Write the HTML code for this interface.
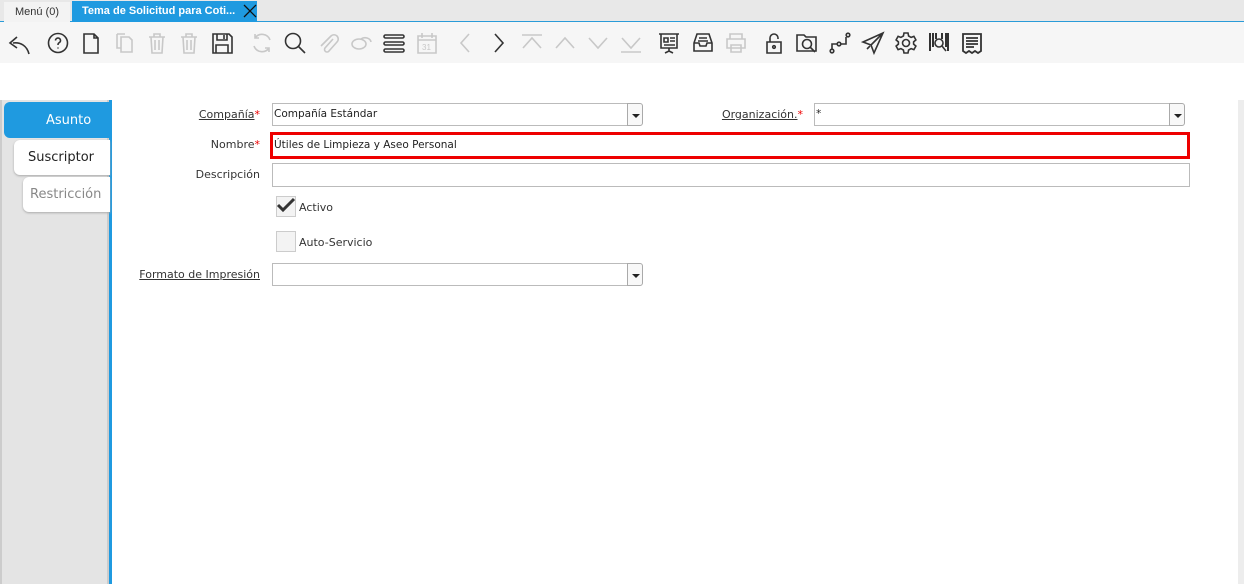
<!DOCTYPE html>
<html><head><meta charset="utf-8"><style>
*{box-sizing:border-box;margin:0;padding:0}
body{width:1244px;height:584px;overflow:hidden;background:#fff;font-family:"Liberation Sans","DejaVu Sans",sans-serif;font-size:12px;color:#222;position:relative}
.a{position:absolute}
.tabbar{left:0;top:0;width:1244px;height:22px;background:#e8e8e8;border-bottom:1px solid #2a9bd8}
.tb{left:0;top:22px;width:1244px;height:41px;background:#f6f6f6}
.lbl{font-family:"DejaVu Sans",sans-serif;font-size:11px;color:#333;text-align:right}
.req{color:#e00}
.inp{border:1px solid #bbb;background:#fff;font-family:"DejaVu Sans",sans-serif;font-size:10.5px;padding-left:1px;line-height:21px}
.dd{border:1px solid #aaa;border-radius:0 3px 3px 0;background:#f8f8f8;width:16px;height:23px}
.dd:after{content:"";position:absolute;left:4px;top:10px;border-left:4px solid transparent;border-right:4px solid transparent;border-top:4px solid #222}
.cb{width:20px;height:21px;border:1px solid #ccc;background:#f3f3f3}
svg{position:absolute;top:31px;width:24px;height:24px;fill:none;stroke-width:1.6}
.on{stroke:#333}.off{stroke:#c8c8c8}
</style></head><body>
<div class="a tabbar"></div>
<div class="a" style="left:4px;top:2px;width:66px;height:20px;background:#f3f3f3;font-size:11px;color:#333;line-height:20px;text-align:center">Menú (0)</div>
<div class="a" style="left:72px;top:1px;width:185px;height:21px;background:#1f9ae0;color:#fff;font-size:11px;font-weight:bold;line-height:21px;padding-left:10px;white-space:nowrap">Tema de Solicitud para Coti...</div>
<svg style="left:242px;top:3px;width:16px;height:16px" viewBox="0 0 16 16"><path d="M2 2L14 14M14 2L2 14" stroke="#111" stroke-width="1.3"/></svg>
<div class="a tb"></div>
<svg class="on" style="left:7px" viewBox="0 0 24 24"><path d="M22 23C20 15 14 11 6 12M10 6L3 12L10 17"/></svg>
<svg class="on" style="left:46px" viewBox="0 0 24 24"><circle cx="12" cy="12" r="9.5"/><path d="M9.5 9.5a2.5 2.5 0 1 1 3.5 2.3c-1 .5-1 1-1 2.2M12 16.5v1"/></svg>
<svg class="on" style="left:79px" viewBox="0 0 24 24"><path d="M5 3h10l4 4v15H5z M15 3v4h4"/></svg>
<svg class="off" style="left:112px" viewBox="0 0 24 24"><path d="M9 6h8l3 3v12H9zM5 3h8M5 3v14h4"/></svg>
<svg class="off" style="left:145px" viewBox="0 0 24 24"><path d="M4 6h16M9 6V3h6v3M6 6l1 16h10l1-16M10 9v10M14 9v10"/></svg>
<svg class="off" style="left:177px" viewBox="0 0 24 24"><path d="M4 6h16M9 6V3h6v3M6 6l1 16h10l1-16M10 9v10M14 9v10"/></svg>
<svg class="on" style="left:210px" viewBox="0 0 24 24"><path d="M3 3h16l3 3v16H3zM7 3v6h10V3M14 4v4M6 14h12v8H6z"/></svg>
<svg class="off" style="left:250px" viewBox="0 0 24 24"><path d="M20 9A8.5 8.5 0 0 0 5 7M4 15a8.5 8.5 0 0 0 15 2M5 3v4h4M19 21v-4h-4"/></svg>
<svg class="on" style="left:283px" viewBox="0 0 24 24"><circle cx="10" cy="10" r="7.5"/><path d="M15.5 15.5L22 22"/></svg>
<svg class="off" style="left:316px" viewBox="0 0 24 24"><path d="M17 8l-8 9a2.5 2.5 0 0 0 4 3l8-9a4 4 0 0 0-6-6L5 15"/></svg>
<svg class="off" style="left:349px" viewBox="0 0 24 24"><ellipse cx="10" cy="13" rx="7" ry="5"/><path d="M12 8a6 5 0 0 1 10 3"/></svg>
<svg class="on" style="left:382px" viewBox="0 0 24 24" stroke-width="2.2"><rect x="2" y="4" width="20" height="3" rx="1.5"/><rect x="2" y="11" width="20" height="3" rx="1.5"/><rect x="2" y="18" width="20" height="3" rx="1.5"/></svg>
<svg class="off" style="left:415px" viewBox="0 0 24 24"><path d="M3 5h18v17H3zM3 9h18M7 2v5M17 2v5"/><text x="7" y="19" font-size="8" fill="#c8c8c8" stroke="none">31</text></svg>
<svg class="off" style="left:454px" viewBox="0 0 24 24"><path d="M15 3L7 12l8 9"/></svg>
<svg class="on" style="left:486px" viewBox="0 0 24 24"><path d="M9 3l8 9-8 9"/></svg>
<svg class="off" style="left:520px" viewBox="0 0 24 24"><path d="M2 4h20M3 17l9-10 9 10"/></svg>
<svg class="off" style="left:553px" viewBox="0 0 24 24"><path d="M3 17l9-10 9 10"/></svg>
<svg class="off" style="left:586px" viewBox="0 0 24 24"><path d="M3 7l9 10 9-10"/></svg>
<svg class="off" style="left:619px" viewBox="0 0 24 24"><path d="M3 7l9 10 9-10M2 21h20"/></svg>
<svg class="on" style="left:657px" viewBox="0 0 24 24"><path d="M2 3h20M4 3v14h16V3M7 7h4v4H7zM13 7h5M13 10h5M7 14h11M12 17v3M8 22l4-2 4 2"/></svg>
<svg class="on" style="left:691px" viewBox="0 0 24 24"><path d="M6 3h12l3 9v8H3v-8zM3 12h5l1 3h6l1-3h5M8 7h8M7 10h10"/></svg>
<svg class="off" style="left:724px" viewBox="0 0 24 24"><path d="M6 8V3h12v5M3 8h18v9H3zM7 14h10v7H7z"/></svg>
<svg class="on" style="left:762px" viewBox="0 0 24 24"><path d="M5 11h14v11H5zM8 11V7a4 4 0 0 1 8 0v1"/><circle cx="12" cy="16" r="1.3"/></svg>
<svg class="on" style="left:795px" viewBox="0 0 24 24"><path d="M2 4h7l2 2h10v14H2z"/><circle cx="12" cy="13" r="4.5"/><path d="M15 16l5 5"/></svg>
<svg class="on" style="left:828px" viewBox="0 0 24 24"><circle cx="4" cy="20" r="1.8"/><circle cx="11" cy="13" r="1.8"/><circle cx="20" cy="4" r="1.8"/><path d="M4 18v-5h5M13 13h5V6"/></svg>
<svg class="on" style="left:861px" viewBox="0 0 24 24"><path d="M22 2L2 11l8 3 3 8zM22 2L10 14M6 18l3-3"/></svg>
<svg class="on" style="left:894px" viewBox="0 0 24 24"><circle cx="12" cy="12" r="3.5"/><path d="M10 2h4l.6 3 2.5 1.4 2.8-1 2 3.5-2.3 2v2.2l2.3 2-2 3.5-2.8-1-2.5 1.4L14 22h-4l-.6-3-2.5-1.4-2.8 1-2-3.5 2.3-2v-2.2l-2.3-2 2-3.5 2.8 1L9.4 5z"/></svg>
<svg class="on" style="left:927px" viewBox="0 0 24 24"><path d="M3 2v18M6 2v14M9 2v6M15 2v6M19 2v14M21 2v18" stroke-width="2"/><circle cx="12" cy="12" r="4"/><path d="M15 15l4 5"/></svg>
<svg class="on" style="left:960px" viewBox="0 0 24 24"><path d="M3 3h18v17l-3 2-3-2-3 2-3-2-3 2-3-2zM6 7h12M6 10h12M6 13h12M6 16h8" stroke-width="1.8"/></svg>

<div class="a" style="left:0;top:100px;width:109px;height:484px;background:#e4e4e4;border-left:2px solid #ccc;border-right:2px solid #ccc"></div>
<div class="a" style="left:109px;top:100px;width:3px;height:484px;background:#1f9ae0"></div>
<div class="a" style="left:1238px;top:100px;width:6px;height:484px;background:#ededed"></div>
<div class="a" style="left:4px;top:102px;width:106px;height:36px;background:#1f9ae0;border-radius:6px 0 0 6px;color:#fff;font-family:'DejaVu Sans',sans-serif;font-size:13px;line-height:37px;padding-left:42px">Asunto</div>
<div class="a" style="left:14px;top:140px;width:96px;height:35px;background:#fff;border-radius:6px 0 0 6px;box-shadow:0 1px 2px #aaa;font-family:'DejaVu Sans',sans-serif;font-size:13px;line-height:36px;padding-left:14px;color:#222">Suscriptor</div>
<div class="a" style="left:23px;top:177px;width:87px;height:35px;background:#fff;border-radius:6px 0 0 6px;box-shadow:0 1px 2px #aaa;font-family:'DejaVu Sans',sans-serif;font-size:13px;line-height:36px;padding-left:7px;color:#888">Restricción</div>

<div class="a lbl" style="left:150px;top:108px;width:110px"><u>Compañía</u><span class="req">*</span></div>
<div class="a inp" style="left:272px;top:103px;width:356px;height:23px">Compañía Estándar</div>
<div class="a dd" style="left:627px;top:103px"></div>
<div class="a lbl" style="left:690px;top:108px;width:113px"><u>Organización.</u><span class="req">*</span></div>
<div class="a inp" style="left:814px;top:103px;width:356px;height:23px">*</div>
<div class="a dd" style="left:1169px;top:103px"></div>
<div class="a lbl" style="left:150px;top:138px;width:110px">Nombre<span class="req">*</span></div>
<div class="a inp" style="left:270px;top:132px;width:920px;height:27px;border:3px solid #e00;line-height:21px">Útiles de Limpieza y Aseo Personal</div>
<div class="a lbl" style="left:150px;top:168px;width:110px">Descripción</div>
<div class="a inp" style="left:272px;top:163px;width:918px;height:24px"></div>
<div class="a cb" style="left:276px;top:196px"></div>
<svg style="left:276px;top:195px;width:20px;height:20px" viewBox="0 0 20 20"><path d="M2 10l5 5L18 4" stroke="#333" stroke-width="3"/></svg>
<div class="a lbl" style="left:299px;top:201px;text-align:left">Activo</div>
<div class="a cb" style="left:276px;top:231px"></div>
<div class="a lbl" style="left:299px;top:236px;text-align:left">Auto-Servicio</div>
<div class="a lbl" style="left:130px;top:268px;width:130px"><u>Formato de Impresión</u></div>
<div class="a inp" style="left:272px;top:263px;width:356px;height:23px"></div>
<div class="a dd" style="left:627px;top:263px"></div>
</body></html>
